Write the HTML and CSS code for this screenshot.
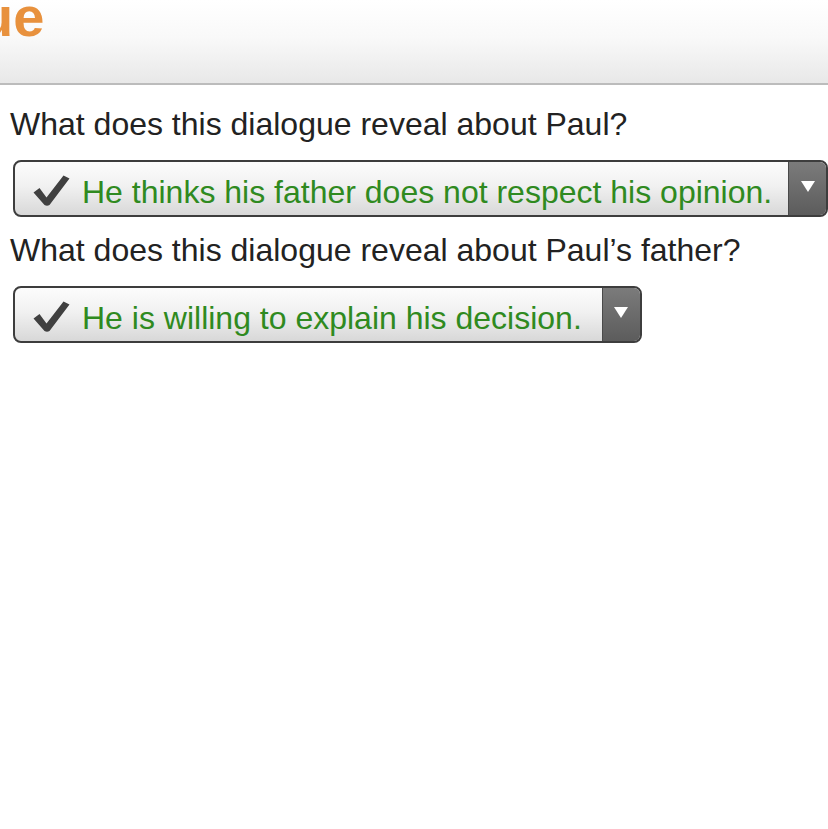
FILE: index.html
```html
<!DOCTYPE html>
<html>
<head>
<meta charset="utf-8">
<link rel="stylesheet" href="styles.css">
</head>
<body>
<div class="header"><span class="title">ue</span></div>
<div class="content">
  <p class="question first">What does this dialogue reveal about Paul?</p>
  <div class="select wide">
    <div class="choice">
      <svg class="check" viewBox="0 0 37 31" width="37" height="31"><path d="M0.5 17.5 L6.5 13 L13.5 22.5 L30.5 0.5 L36.5 3.5 L16.5 30 Q14 31.5 11.5 30 Z" fill="#404040"/></svg>
      <span class="answer">He thinks his father does not respect his opinion.</span>
    </div>
    <div class="arrow"><span class="tri"></span></div>
  </div>
  <p class="question">What does this dialogue reveal about Paul’s father?</p>
  <div class="select">
    <div class="choice">
      <svg class="check" viewBox="0 0 37 31" width="37" height="31"><path d="M0.5 17.5 L6.5 13 L13.5 22.5 L30.5 0.5 L36.5 3.5 L16.5 30 Q14 31.5 11.5 30 Z" fill="#404040"/></svg>
      <span class="answer">He is willing to explain his decision.</span>
    </div>
    <div class="arrow"><span class="tri"></span></div>
  </div>
</div>
</body>
</html>
```
FILE: styles.css
```css
html, body {
  margin: 0;
  padding: 0;
  background: #fff;
  font-family: "Liberation Sans", Arial, sans-serif;
  overflow: hidden;
}
.header {
  height: 83px;
  background: linear-gradient(to bottom, #ffffff 0%, #f9f9f9 45%, #e8e8e8 100%);
  border-bottom: 2px solid #bcbcbc;
  position: relative;
  overflow: hidden;
}
.title {
  position: absolute;
  left: -21px;
  top: -11px;
  font-size: 56px;
  font-weight: bold;
  color: #e8913d;
  line-height: 1;
}
.content {
  padding: 0 0 0 10px;
}
.question {
  margin: 0;
  padding: 14px 0 17px;
  font-size: 32px;
  line-height: 38px;
  color: #222;
}
.question.first {
  padding-top: 20px;
}
.select {
  display: inline-flex;
  margin-left: 3px;
  height: 53px;
  border: 2px solid #3d3d3d;
  border-radius: 8px;
  overflow: hidden;
  background: linear-gradient(to bottom, #fcfcfc 0%, #f1f1f1 45%, #d8d8d8 100%);
  vertical-align: top;
}
.select.wide {
  width: 811px;
}
.choice {
  display: flex;
  align-items: center;
  padding-left: 18px;
  flex: 1;
  min-width: 0;
  white-space: nowrap;
}
.check {
  flex: none;
  margin-right: 12px;
  margin-top: 4px;
}
.answer {
  font-size: 32px;
  color: #2f8a20;
  padding-right: 20px;
  margin-top: 8px;
}
.arrow {
  flex: none;
  width: 37px;
  background: linear-gradient(to bottom, #7b7b7b 0%, #5c5c5c 100%);
  border-left: 1px solid #4a4a4a;
  display: flex;
  align-items: center;
  justify-content: center;
}
.tri {
  width: 0;
  height: 0;
  border-left: 7px solid transparent;
  border-right: 7px solid transparent;
  border-top: 11px solid #fff;
  margin-top: -4px;
}
```
